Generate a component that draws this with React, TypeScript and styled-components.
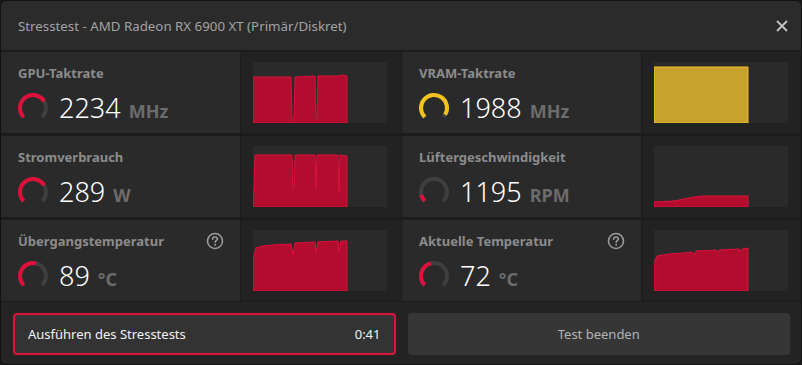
import styled, {createGlobalStyle} from "styled-components";

const GlobalStyle = createGlobalStyle`
  html, body {
    margin: 0;
    padding: 0;
    background: #1a1a1a;
  }
  body {
    font-family: "Noto Sans", "Open Sans", sans-serif;
  }
`;

type Metric = {
  label: string;
  value: string;
  unit: string;
  fraction: number;
  color: string;
  help?: boolean;
  chart: string;
  lineColor: string;
  fillColor: string;
};

const red = "#b20c2f";
const redLine = "#e0103c";

const metrics: Metric[] = [
  {
    label: "GPU-Taktrate",
    value: "2234",
    unit: "MHz",
    fraction: 0.72,
    color: "#e0103c",
    chart:
      "M0,61 L0,17 L1,15 L20,15 L38,15 L39,58 L41,58 L42,15 L62,14 L63,58 L64,58 L65,14 L85,14 L88,13 L94,14 L94,61 Z",
    lineColor: redLine,
    fillColor: red
  },
  {
    label: "VRAM-Taktrate",
    value: "1988",
    unit: "MHz",
    fraction: 0.95,
    color: "#f2c21f",
    chart: "M0,61 L0,5 L94,5 L94,61 Z",
    lineColor: "#f0c020",
    fillColor: "#c8a22e"
  },
  {
    label: "Stromverbrauch",
    value: "289",
    unit: "W",
    fraction: 0.72,
    color: "#e0103c",
    chart:
      "M0,61 L0,46 L1,44 L2,9 L39,9 L40,42 L41,42 L42,9 L62,9 L63,42 L64,9 L85,9 L86,47 L87,9 L94,10 L94,61 Z",
    lineColor: redLine,
    fillColor: red
  },
  {
    label: "Lüftergeschwindigkeit",
    value: "1195",
    unit: "RPM",
    fraction: 0.12,
    color: "#e0103c",
    chart: "M0,61 L0,56 L20,55 L30,53 L40,51 L48,50 L94,50 L94,61 Z",
    lineColor: redLine,
    fillColor: red
  },
  {
    label: "Übergangstemperatur",
    value: "89",
    unit: "°C",
    fraction: 0.55,
    color: "#e0103c",
    help: true,
    chart:
      "M0,61 L0,30 L3,18 L10,16 L20,15 L38,14 L40,25 L42,13 L62,12 L63,23 L65,12 L85,11 L86,22 L88,11 L94,11 L94,61 Z",
    lineColor: redLine,
    fillColor: red
  },
  {
    label: "Aktuelle Temperatur",
    value: "72",
    unit: "°C",
    fraction: 0.45,
    color: "#e0103c",
    help: true,
    chart:
      "M0,61 L0,33 L3,26 L15,24 L30,23 L38,22 L40,25 L42,21 L62,20 L63,23 L65,20 L85,19 L86,22 L88,19 L94,18 L94,61 Z",
    lineColor: redLine,
    fillColor: red
  }
];

const polar = (angle: number, r: number) => {
  const rad = (angle * Math.PI) / 180;
  return `${17 + r * Math.cos(rad)},${17 + r * Math.sin(rad)}`;
};

const arc = (from: number, to: number, r: number) =>
  `M${polar(from, r)} A${r},${r} 0 ${to - from > 180 ? 1 : 0} 1 ${polar(to, r)}`;

const Gauge = ({fraction, color}: {fraction: number; color: string}) => {
  const start = 135;
  const end = start + 270 * fraction;
  return (
    <svg width="34" height="34" viewBox="0 0 34 34">
      <path d={arc(start, 405, 13)} fill="none" stroke="#3f3f3f" strokeWidth="4" />
      <path d={arc(start, end, 13)} fill="none" stroke={color} strokeWidth="4" />
    </svg>
  );
};

const HelpIcon = () => (
  <svg width="18" height="18" viewBox="0 0 18 18">
    <circle cx="9" cy="9" r="7.5" fill="none" stroke="#9a9a9a" strokeWidth="1.6" />
    <path
      d="M6.6,7.2 C6.6,5.8 7.7,5 9,5 C10.3,5 11.4,5.8 11.4,7 C11.4,8.4 9.2,8.6 9.2,10.3"
      fill="none"
      stroke="#9a9a9a"
      strokeWidth="1.6"
      strokeLinecap="round"
    />
    <circle cx="9.2" cy="12.8" r="1" fill="#9a9a9a" />
  </svg>
);

const CloseIcon = () => (
  <svg width="12" height="12" viewBox="0 0 12 12">
    <path d="M1,1 L11,11 M11,1 L1,11" stroke="#c4c4c4" strokeWidth="1.8" />
  </svg>
);

const Window = styled.div`
  width: 800px;
  height: 363px;
  border: 1px solid #121212;
  border-radius: 6px;
  overflow: hidden;
  background: #1c1c1c;
  display: flex;
  flex-direction: column;
`;

const TitleBar = styled.div`
  height: 49px;
  background: #2b2b2b;
  display: flex;
  align-items: center;
  justify-content: space-between;
  padding: 0 11px 0 17px;
  margin-bottom: 2px;
`;

const Title = styled.div`
  color: #a3a3a3;
  font-size: 13.3px;
`;

const CloseButton = styled.div`
  display: flex;
  padding: 2px;
`;

const Grid = styled.div`
  display: grid;
  grid-template-columns: 239px 160px 239px 159px;
  grid-auto-rows: 81px;
  column-gap: 1px;
  row-gap: 3px;
`;

const Card = styled.div`
  background: #2a2a2a;
  padding: 11px 16px 0 17px;
  display: flex;
  flex-direction: column;
  gap: 6px;
`;

const LabelRow = styled.div`
  display: flex;
  justify-content: space-between;
  align-items: center;
  height: 20px;
`;

const Label = styled.div`
  color: #8c8c8c;
  font-size: 13px;
  font-weight: 700;
`;

const ValueRow = styled.div`
  display: flex;
  align-items: center;
  gap: 9px;
  margin-left: -2px;
`;

const Value = styled.span`
  color: #ffffff;
  font-size: 27px;
  font-weight: 300;
`;

const Unit = styled.span`
  color: #6c6c6c;
  font-size: 18px;
  font-weight: 700;
  margin-left: 8px;
`;

const ChartPanel = styled.div`
  background: #222222;
  display: flex;
  align-items: center;
  padding-left: 12px;
`;

const Plot = styled.svg`
  display: block;
  background: #2a2a2a;
`;

const Footer = styled.div`
  flex: 1;
  background: #242424;
  margin-top: 1px;
  display: grid;
  grid-template-columns: 1fr 1fr;
  gap: 12px;
  padding: 11px 11px 0 12px;
  align-items: start;
`;

const FooterButton = styled.div<{$active?: boolean}>`
  height: 42px;
  box-sizing: border-box;
  border-radius: 4px;
  background: ${(p) => (p.$active ? "#333333" : "#363636")};
  border: 2px solid ${(p) => (p.$active ? "#dc143c" : "transparent")};
  display: flex;
  align-items: center;
  justify-content: ${(p) => (p.$active ? "space-between" : "center")};
  padding: 0 13px;
  font-size: 13px;
  color: ${(p) => (p.$active ? "#f2f2f2" : "#b4b4b4")};
`;

const MetricCells = ({metric}: {metric: Metric}) => (
  <>
    <Card>
      <LabelRow>
        <Label>{metric.label}</Label>
        {metric.help && <HelpIcon />}
      </LabelRow>
      <ValueRow>
        <Gauge fraction={metric.fraction} color={metric.color} />
        <div>
          <Value>{metric.value}</Value>
          <Unit>{metric.unit}</Unit>
        </div>
      </ValueRow>
    </Card>
    <ChartPanel>
      <Plot width="134" height="61" viewBox="0 0 134 61">
        <path d={metric.chart} fill={metric.fillColor} stroke={metric.lineColor} strokeWidth="1" />
      </Plot>
    </ChartPanel>
  </>
);

const App = () => (
  <>
    <GlobalStyle />
    <Window>
      <TitleBar>
        <Title>Stresstest - AMD Radeon RX 6900 XT (Primär/Diskret)</Title>
        <CloseButton>
          <CloseIcon />
        </CloseButton>
      </TitleBar>
      <Grid>
        {metrics.map((metric) => (
          <MetricCells key={metric.label} metric={metric} />
        ))}
      </Grid>
      <Footer>
        <FooterButton $active>
          <span>Ausführen des Stresstests</span>
          <span>0:41</span>
        </FooterButton>
        <FooterButton>Test beenden</FooterButton>
      </Footer>
    </Window>
  </>
);

export default App;
